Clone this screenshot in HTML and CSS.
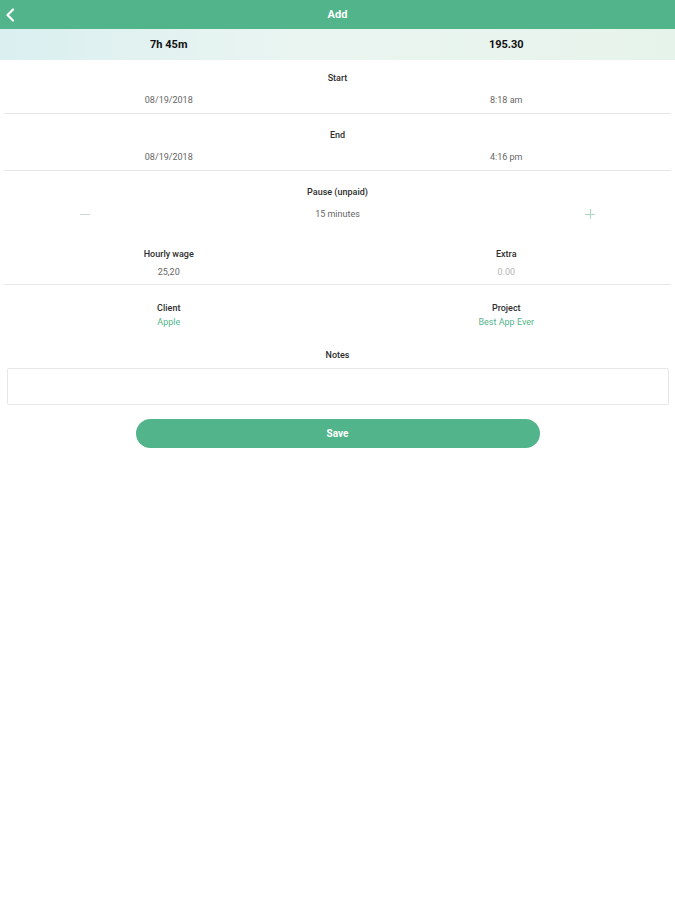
FILE: index.html
```html
<!DOCTYPE html>
<html lang="en">
<head>
    <meta charset="UTF-8">
    <title>Add</title>
    <link rel="stylesheet" href="styles.css">
</head>
<body>
    <div class="topbar">
        <a class="back" href="#">
            <svg width="10" height="14" viewBox="0 0 10 14"><path d="M8 1.5 L2.5 7 L8 12.5" fill="none" stroke="#fff" stroke-width="2.2" stroke-linecap="round" stroke-linejoin="round"/></svg>
        </a>
        <div class="title">Add</div>
        <div></div>
    </div>

    <div class="summary">
        <div>7h 45m</div>
        <div>195.30</div>
    </div>

    <div class="block start">
        <p class="label">Start</p>
        <div class="pair">
            <span class="value">08/19/2018</span>
            <span class="value">8:18 am</span>
        </div>
    </div>
    <div class="line"></div>

    <div class="block end">
        <p class="label">End</p>
        <div class="pair">
            <span class="value">08/19/2018</span>
            <span class="value">4:16 pm</span>
        </div>
    </div>
    <div class="line"></div>

    <div class="block pause">
        <p class="label">Pause (unpaid)</p>
        <div class="stepper">
            <span class="minus"></span>
            <span class="value">15 minutes</span>
            <span class="plus"></span>
        </div>
    </div>

    <div class="pair block wage">
        <div class="cell">
            <p class="label">Hourly wage</p>
            <span class="value">25,20</span>
        </div>
        <div class="cell">
            <p class="label">Extra</p>
            <span class="value muted">0.00</span>
        </div>
    </div>
    <div class="line"></div>

    <div class="pair block client">
        <div class="cell">
            <p class="label">Client</p>
            <span class="value link">Apple</span>
        </div>
        <div class="cell">
            <p class="label">Project</p>
            <span class="value link">Best App Ever</span>
        </div>
    </div>

    <div class="block notes">
        <p class="label">Notes</p>
        <textarea class="notes-box"></textarea>
    </div>

    <div class="save-bar"><button class="save">Save</button></div>
</body>
</html>
```

FILE: styles.css
```css
* { margin: 0; padding: 0; box-sizing: border-box; }
body {
    background: #fff;
    font-family: Roboto, "Liberation Sans", sans-serif;
    color: #222; }

.topbar {
    display: grid;
    grid-template-columns: 29px 1fr 29px;
    align-items: center;
    height: 29px;
    background: #52b48a; }
.back { display: flex; padding-left: 5px; }
.title {
    text-align: center;
    color: #fff;
    font-size: 11px;
    font-weight: bold; }

.summary {
    display: grid;
    grid-template-columns: 1fr 1fr;
    align-items: center;
    height: 31px;
    background: linear-gradient(to right, #daeff0, #eaf5f1 45%, #e6f3ea);
    font-size: 11px;
    font-weight: bold;
    color: #111;
    text-align: center; }

.label {
    font-size: 9px;
    line-height: 12px;
    font-weight: 500;
    color: #2e2e2e;
    text-align: center; }
.value {
    font-size: 9px;
    line-height: 12px;
    color: #666;
    text-align: center; }
.value.muted { color: #b4b4b4; }
.value.link { color: #52b48a; }

.pair {
    display: grid;
    grid-template-columns: 1fr 1fr; }
.cell { display: flex; flex-direction: column; align-items: center; }

.line { height: 1px; margin: 0 4px; background: #e6e6e6; }

.start { padding: 12px 0 7px; }
.start .pair { margin-top: 10px; }
.end { padding: 15px 0 7px; }
.end .pair { margin-top: 10px; }

.pause { padding-top: 15px; }
.stepper {
    display: grid;
    grid-template-columns: 170px 1fr 170px;
    align-items: center;
    margin-top: 10px; }
.minus {
    justify-self: center;
    width: 10px; height: 1px;
    background: #c9d8d2; }
.plus {
    justify-self: center;
    position: relative;
    width: 10px; height: 10px; }
.plus::before, .plus::after {
    content: "";
    position: absolute;
    background: #a9d8c3; }
.plus::before { left: 0; top: 4.5px; width: 10px; height: 1px; }
.plus::after { left: 4.5px; top: 0; width: 1px; height: 10px; }

.wage { padding: 28px 0 6px; }
.wage .value { margin-top: 6px; }

.client { padding: 17px 0 0; }
.client .value { margin-top: 2px; }

.notes { padding-top: 21px; }
.notes-box {
    display: block;
    width: 662px;
    height: 37px;
    margin: 7px 0 0 7px;
    border: 1px solid #e6e6e6;
    border-radius: 2px;
    resize: none;
    outline: none; }

.save-bar { display: flex; justify-content: center; padding-top: 14px; }
.save {
    width: 404px;
    height: 29px;
    border: 0;
    border-radius: 15px;
    background: #52b48a;
    color: #fff;
    font-family: Roboto, "Liberation Sans", sans-serif;
    font-size: 10px;
    font-weight: bold;
    cursor: pointer; }
```
